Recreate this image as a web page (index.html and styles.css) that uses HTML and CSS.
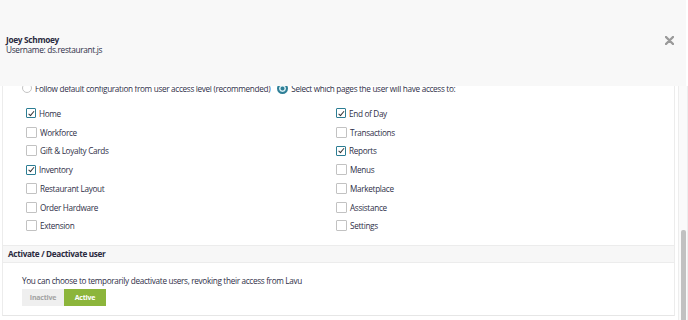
FILE: index.html
```html
<!DOCTYPE html>
<html lang="en">
<head>
    <meta charset="UTF-8">
    <title>User Access</title>
    <link rel="stylesheet" href="styles.css">
</head>
<body>
    <div class="modal">
        <div class="modal-header">
            <div class="user-info">
                <div class="user-name">Joey Schmoey</div>
                <div class="user-login">Username: ds.restaurant.js</div>
            </div>
            <svg class="close-btn" width="9" height="9" viewBox="0 0 9 9">
                <path d="M1 1 L8 8 M8 1 L1 8" stroke="#9a9a9a" stroke-width="2.4" stroke-linecap="round"/>
            </svg>
        </div>

        <div class="modal-body">
            <div class="scroll-area">
                <div class="panel">
                    <div class="radio-row">
                        <label class="radio"><span class="radio-dot"></span>Follow default configuration from user access level (recommended)</label>
                        <label class="radio"><span class="radio-dot checked"></span>Select which pages the user will have access to:</label>
                    </div>

                    <div class="pages">
                        <div class="page-col">
                            <label class="check"><span class="box checked"></span>Home</label>
                            <label class="check"><span class="box"></span>Workforce</label>
                            <label class="check"><span class="box"></span>Gift &amp; Loyalty Cards</label>
                            <label class="check"><span class="box checked"></span>Inventory</label>
                            <label class="check"><span class="box"></span>Restaurant Layout</label>
                            <label class="check"><span class="box"></span>Order Hardware</label>
                            <label class="check"><span class="box"></span>Extension</label>
                        </div>
                        <div class="page-col">
                            <label class="check"><span class="box checked"></span>End of Day</label>
                            <label class="check"><span class="box"></span>Transactions</label>
                            <label class="check"><span class="box checked"></span>Reports</label>
                            <label class="check"><span class="box"></span>Menus</label>
                            <label class="check"><span class="box"></span>Marketplace</label>
                            <label class="check"><span class="box"></span>Assistance</label>
                            <label class="check"><span class="box"></span>Settings</label>
                        </div>
                    </div>

                    <div class="section-title">Activate / Deactivate user</div>
                    <div class="section-body">
                        <p>You can choose to temporarily deactivate users, revoking their access from Lavu</p>
                        <div class="toggle">
                            <button type="button" class="toggle-off">Inactive</button>
                            <button type="button" class="toggle-on">Active</button>
                        </div>
                    </div>
                </div>
            </div>
            <div class="scrollbar"><div class="thumb"></div></div>
        </div>
    </div>
</body>
</html>
```

FILE: styles.css
```css
/* Modal de acesso do usuario */
body {
    margin: 0;
    background: #fff;
    font-family: "Open Sans", Arial, sans-serif;
    color: #2f2f48;
    font-size: 8.2px;
    letter-spacing: -0.32px;
}

.modal {
    width: 688px;
    height: 320px;
    overflow: hidden;
}

.modal-header {
    position: relative;
    z-index: 2;
    height: 86px;
    width: 686px;
    background: #f8f8f8;
    display: flex;
    align-items: center;
    justify-content: space-between;
    padding: 0 12px 0 6px;
    box-sizing: border-box;
}

.user-info {
    margin-top: 4px;
    line-height: 10px;
}

.user-name {
    font-weight: bold;
    font-size: 8.3px;
    color: #2a2a3e;
}

.user-login {
    font-size: 8.3px;
}

.close-btn {
    margin-top: -6px;
}

.modal-body {
    display: flex;
    height: 234px;
}

.scroll-area {
    width: 673px;
    padding-left: 2px;
    overflow: hidden;
}

.panel {
    margin-top: -9px;
    border-left: 1px solid #ececec;
    border-right: 1px solid #ececec;
    border-bottom: 1px solid #e6e6e6;
}

.radio-row {
    display: flex;
    gap: 7px;
    padding: 4px 0 0 19px;
    height: 14px;
    font-size: 8.2px;
}

.radio {
    display: flex;
    align-items: center;
    gap: 3px;
}

.radio-dot {
    width: 8px;
    height: 8px;
    border: 1px solid #c4c4c4;
    border-radius: 50%;
    background: #fff;
}

.radio-dot.checked {
    border: 2px solid #2f7f97;
    width: 7px;
    height: 7px;
    background: #2f7f97;
    box-shadow: inset 0 0 0 1.5px #d7eef3;
}

.pages {
    display: grid;
    grid-template-columns: 310px 1fr;
    padding: 9px 0 10px 23px;
}

.page-col {
    display: flex;
    flex-direction: column;
}

.check {
    display: flex;
    align-items: center;
    gap: 3px;
    height: 18.75px;
}

.box {
    width: 9px;
    height: 9px;
    border: 1px solid #c2c2c2;
    border-radius: 1px;
    background: #fff;
    position: relative;
}

.box.checked {
    border: 1.5px solid #2c7d93;
    width: 8px;
    height: 8px;
}

.box.checked::after {
    content: "";
    position: absolute;
    left: 2.5px;
    top: 0.5px;
    width: 2px;
    height: 4.5px;
    border-right: 1px solid #333;
    border-bottom: 1px solid #333;
    transform: rotate(40deg);
}

.section-title {
    background: #f7f7f7;
    border-top: 1px solid #ececec;
    border-bottom: 1px solid #ececec;
    height: 16px;
    line-height: 16px;
    padding-left: 5px;
    font-weight: bold;
    color: #2a2a3e;
}

.section-body {
    padding: 13px 0 9px 19px;
}

.section-body p {
    margin: 0 0 3px;
    line-height: 10px;
}

.toggle {
    display: flex;
}

.toggle button {
    width: 42px;
    height: 17px;
    border: none;
    border-radius: 0;
    font-family: "Open Sans", Arial, sans-serif;
    font-size: 7px;
    font-weight: bold;
    letter-spacing: -0.2px;
    padding: 0;
}

.toggle-off {
    background: #efefef;
    color: #a3a3a3;
}

.toggle-on {
    background: #8cb53b;
    color: #fff;
}

.scrollbar {
    margin-left: 3px;
    width: 8px;
    border-left: 1px solid #ededed;
    border-right: 1px solid #ededed;
    background: #fafafa;
    display: flex;
    flex-direction: column;
    justify-content: flex-end;
    align-items: center;
}

.thumb {
    width: 5px;
    height: 90px;
    background: #c1c1c1;
    border-radius: 2px 2px 0 0;
}
```
